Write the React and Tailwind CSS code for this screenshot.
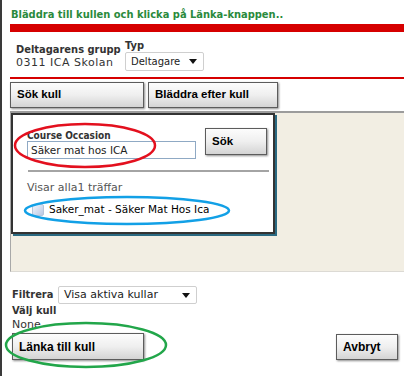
import React from 'react';

// Grey bevelled button used throughout the dialog
const Btn = ({ children, className = '' }) => (
  <div
    className={`flex items-center pl-[6px] border border-[#5c5c5c] bg-linear-to-b from-[#fcfcfc] via-[#efefef] to-[#d4d4d4] shadow-[1px_1px_2px_rgba(0,0,0,0.45)] font-['Liberation_Sans',Arial,sans-serif] font-bold text-black whitespace-nowrap ${className}`}
  >
    {children}
  </div>
);

const Arrow = () => (
  <svg width="8" height="5" viewBox="0 0 8 5" className="shrink-0">
    <path d="M0 0H8L4 5Z" fill="#111" />
  </svg>
);

const Select = ({ children, className = '' }) => (
  <div
    className={`flex items-center justify-between pl-[5px] pr-[6px] bg-white border border-[#cfcfcf] rounded-[2px] text-[#222] whitespace-nowrap ${className}`}
  >
    <span>{children}</span>
    <Arrow />
  </div>
);

export default function App() {
  return (
    <div className="relative w-[404px] h-[376px] overflow-hidden bg-white border-l-2 border-[#3a3a3a] font-['DejaVu_Sans',sans-serif] text-[#333]">
      <div className="pl-[8px]">
        {/* Instruction */}
        <div className="h-[24px] pt-[8px] pl-[1px] font-['DejaVu_Sans_Condensed','DejaVu_Sans',sans-serif] text-[11px] leading-[14px] font-bold text-[#2a8a3c] whitespace-nowrap">
          Bläddra till kullen och klicka på Länka-knappen..
        </div>
        <div className="h-[8px] bg-[#d60000]" />

        {/* Group / type */}
        <div className="flex h-[45px]">
          <div className="w-[115px] pl-[6px] pt-[11px] text-[11px] leading-[13px] whitespace-nowrap">
            <div className="font-['DejaVu_Sans_Condensed','DejaVu_Sans',sans-serif] font-bold">Deltagarens grupp</div>
            <div className="tracking-[0.5px]">0311 ICA Skolan</div>
          </div>
          <div className="pt-[7px]">
            <div className="font-['DejaVu_Sans_Condensed','DejaVu_Sans',sans-serif] text-[11px] leading-[13px] font-bold">Typ</div>
            <Select className="w-[79px] h-[19px] text-[10px]">Deltagare</Select>
          </div>
        </div>
        <div className="h-[2px] bg-[#d60000]" />

        {/* Mode buttons */}
        <div className="flex gap-[4px] mt-[3px]">
          <Btn className="w-[134px] h-[26px] text-[11.5px]">Sök kull</Btn>
          <Btn className="w-[130px] h-[26px] text-[11.5px]">Bläddra efter kull</Btn>
        </div>
        <div className="mt-[3px] h-[2px] bg-[#9c9c9c]" />

        {/* Search panel */}
        <div className="h-[159px] bg-[#f2eee3] border-l border-l-[#a8a8a8] border-b border-b-[#dcdad4]">
          <div className="w-[264px] h-[121px] bg-white border-2 border-[#333] shadow-[2px_2px_0_#2b6a82]">
            <div className="flex pl-[14px] pt-[13px]">
              <div className="pt-[2px]">
                <div className="font-['DejaVu_Sans_Condensed','DejaVu_Sans',sans-serif] text-[10px] leading-[11px] font-bold">Course Occasion</div>
                <div className="w-[169px] h-[18px] border border-[#8fa9c4] pl-[3px] text-[10.5px] leading-[16px] text-[#222]">
                  Säker mat hos ICA
                </div>
              </div>
              <Btn className="ml-[9px] w-[62px] h-[27px] text-[11.5px]">Sök</Btn>
            </div>
            <div className="ml-[15px] mt-[11px] w-[241px] h-[2px] bg-[#a4a4a4]" />
            <div className="pl-[14px] mt-[9px] text-[11px] leading-[14px] text-[#555]">Visar alla1 träffar</div>
            <div className="flex items-center pl-[19px] mt-[8px] h-[14px]">
              <div className="w-[12px] h-[12px] rounded-[2px] border border-[#b8c4d8] bg-linear-to-br from-[#f2f5fb] to-[#b9c8e4]" />
              <span className="ml-[5px] text-[10.5px] text-black whitespace-nowrap">Saker_mat - Säker Mat Hos Ica</span>
            </div>
          </div>
        </div>

        {/* Filter */}
        <div className="flex items-center mt-[14px] pl-[2px]">
          <div className="w-[46px] font-['DejaVu_Sans_Condensed','DejaVu_Sans',sans-serif] text-[11px] font-bold">Filtrera</div>
          <Select className="w-[139px] h-[18px] text-[11px]">Visa aktiva kullar</Select>
        </div>
        <div className="pl-[2px] font-['DejaVu_Sans_Condensed','DejaVu_Sans',sans-serif] text-[11px] leading-[13px] font-bold">Välj kull</div>
        <div className="pl-[2px] mt-[1px] text-[11px] leading-[13px]">None</div>

        <div className="flex justify-between items-end mt-[2px] pl-[2px] pr-[6px]">
          <Btn className="w-[132px] h-[27px] text-[12px]">Länka till kull</Btn>
          <Btn className="w-[62px] h-[26px] text-[12px]">Avbryt</Btn>
        </div>
      </div>

      {/* Annotation rings drawn over the screenshot */}
      <svg className="absolute inset-0 pointer-events-none" width="404" height="376">
        <ellipse cx="83" cy="145.5" rx="70" ry="21.5" fill="none" stroke="#e3101e" strokeWidth="2.5" />
        <ellipse cx="125" cy="210.5" rx="102" ry="13.5" fill="none" stroke="#12a0e6" strokeWidth="2.5" />
        <ellipse cx="84" cy="345" rx="80" ry="22" fill="none" stroke="#22a64a" strokeWidth="2.5" />
      </svg>
    </div>
  );
}
